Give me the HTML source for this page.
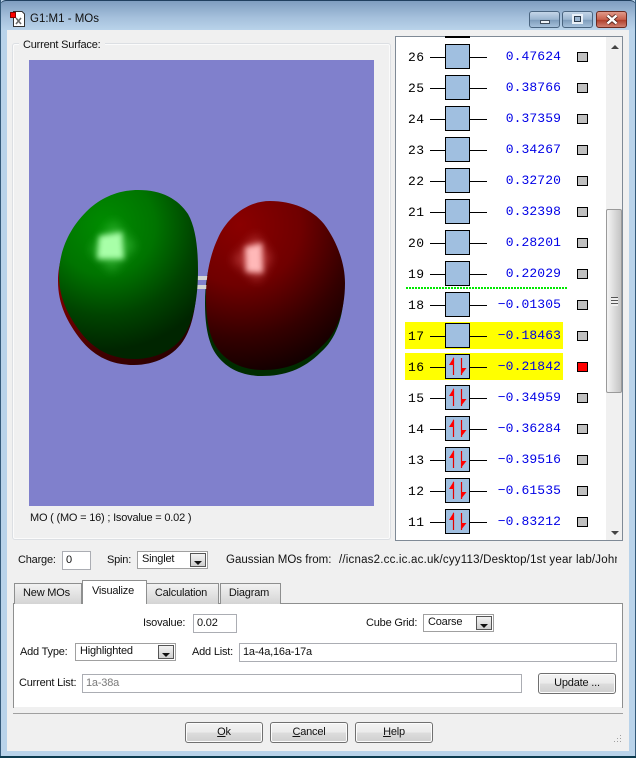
<!DOCTYPE html>
<html>
<head>
<meta charset="utf-8">
<style>
html,body{margin:0;padding:0;width:636px;height:758px;overflow:hidden;background:#b9d3ea;font-family:"Liberation Sans",sans-serif;font-size:11px;letter-spacing:-.2px;color:#111}
div,span{position:absolute;box-sizing:border-box;white-space:nowrap}
.t{line-height:14px}
.inp{background:#fff;border:1px solid #abadb3;height:19px;line-height:17px;padding-left:3px}
.combo{background:#fff;border:1px solid #a0a0a0;height:18px;line-height:14px;padding-left:4px}
.arrow{right:1px;top:1px;bottom:1px;width:16px;border:1px solid #555;background:linear-gradient(#f2f2f2,#cfcfcf)}
.arrow:after{content:"";position:absolute;left:3px;top:7px;border-left:4px solid transparent;border-right:4px solid transparent;border-top:4px solid #111}
.btn{border:1px solid #707070;border-radius:3px;background:linear-gradient(#f3f3f3 0,#ebebeb 48%,#dcdcdc 52%,#cfcfcf 100%);text-align:center;box-shadow:inset 0 0 0 1px #fcfcfc}
.tab{border:1px solid #8e8f8f;border-bottom:none;background:linear-gradient(#f2f2f2,#d4d4d4);text-align:center;line-height:18px;height:21px;top:583px;padding-right:3px}
.n{left:408px;width:20px;font-family:"Liberation Mono",monospace;font-size:13px;letter-spacing:.4px;color:#000;line-height:14px}
.v{right:75px;font-family:"Liberation Mono",monospace;font-size:13px;letter-spacing:.1px;color:#0000e6;line-height:14px;text-align:right}
.l{left:430px;width:57px;height:1px;background:#000}
.b{left:445px;width:25px;height:25px;background:#a0bfe0;border:1px solid #000}
.s{left:577px;width:11px;height:10px;background:#c0c0c0;border:1px solid #000}
</style>
</head>
<body>
<!-- title bar -->
<div style="left:0;top:0;width:636px;height:30px;background:linear-gradient(#7f9ec0,#a4bfdb 55%,#b9d3ea);border-top:1px solid #20405f;border-radius:6px 6px 0 0"></div>
<div style="left:0;top:0;width:1px;height:758px;background:#345a7a"></div>
<div style="left:635px;top:0;width:1px;height:758px;background:#345a7a"></div>
<div style="left:0;top:756px;width:636px;height:2px;background:#0d3b4f"></div>

<svg style="position:absolute;left:9px;top:10px" width="18" height="18">
<path d="M4.500 1.500H13L15.500 4V16.500H4.500Z" fill="#fff" stroke="#333"/>
<rect x="1.500" y="2.500" width="5" height="5" fill="#f00" stroke="#800"/>
<path d="M7 8l5 6M12 8l-5 6" stroke="#666" stroke-width="1.500"/>
</svg>
<div class="t" style="left:30px;top:12px;color:#111;font-size:11.500px;letter-spacing:0">G1:M1 - MOs</div>

<!-- window buttons -->
<div style="left:529px;top:11px;width:31px;height:17px;border:1px solid #4a6580;border-radius:3px;background:linear-gradient(#c4d6e8,#9ab5d0 50%,#7f9dbc 55%,#a5c0da)"></div>
<div style="left:540px;top:20px;width:10px;height:4px;background:#eef3f8;border:1px solid #3c4a5a"></div>
<div style="left:562px;top:11px;width:31px;height:17px;border:1px solid #4a6580;border-radius:3px;background:linear-gradient(#c4d6e8,#9ab5d0 50%,#7f9dbc 55%,#a5c0da)"></div>
<div style="left:572px;top:14px;width:11px;height:10px;background:#3c4a5a;border:2px solid #e8f0f8"></div>
<div style="left:574px;top:16px;width:7px;height:6px;background:#9ab5d0;border:1px solid #2c3a4a"></div>
<div style="left:596px;top:11px;width:31px;height:17px;border:1px solid #6b2a20;border-radius:3px;background:linear-gradient(#e09a8a,#c8604c 50%,#b0402c 55%,#d08070)"></div>
<svg style="position:absolute;left:604px;top:13px" width="16" height="13"><path d="M3.500 2.500L12.500 10.500M12.500 2.500L3.500 10.500" stroke="#4a2018" stroke-width="4"/><path d="M3.500 2.500L12.500 10.500M12.500 2.500L3.500 10.500" stroke="#fff" stroke-width="2.500"/></svg>

<!-- client -->
<div style="left:7px;top:30px;width:622px;height:721px;background:#f0f0f0"></div>

<!-- group box -->
<div style="left:12px;top:43px;width:379px;height:497px;border:1px solid #dcdfe3;border-radius:3px;box-shadow:inset 0 0 0 1px #fbfbfb"></div>
<div class="t" style="left:19px;top:38px;background:#f0f0f0;padding:0 4px">Current Surface:</div>
<div style="left:29px;top:60px;width:345px;height:446px;background:#8080cc"></div>

<svg style="position:absolute;left:29px;top:60px" width="345" height="446" viewBox="29 60 345 446">
<defs>
<radialGradient id="gg" gradientUnits="userSpaceOnUse" cx="105" cy="225" r="125">
<stop offset="0" stop-color="#008c00"/><stop offset=".4" stop-color="#007400"/><stop offset=".72" stop-color="#004400"/><stop offset="1" stop-color="#002500"/>
</radialGradient>
<radialGradient id="rg" gradientUnits="userSpaceOnUse" cx="240" cy="225" r="150">
<stop offset="0" stop-color="#8a0000"/><stop offset=".4" stop-color="#700000"/><stop offset=".75" stop-color="#340000"/><stop offset="1" stop-color="#120000"/>
</radialGradient>
<linearGradient id="rs" gradientUnits="userSpaceOnUse" x1="58" y1="290" x2="170" y2="365"><stop offset="0" stop-color="#7a0000"/><stop offset=".5" stop-color="#400000"/><stop offset="1" stop-color="#2a0000"/></linearGradient>
<filter id="bl" x="-50%" y="-50%" width="200%" height="200%"><feGaussianBlur stdDeviation="3"/></filter>
<filter id="bl2" x="-50%" y="-50%" width="200%" height="200%"><feGaussianBlur stdDeviation="5"/></filter>
<path id="gp" d="M138 190C162 190 178 199 188 214C196 228 198 250 198 270C198 296 194 318 186 332C176 350 155 359 135 359C112 359 95 350 82 334C68 316 59 298 59 275C59 250 70 228 86 212C100 198 118 190 138 190Z"/>
<path id="rp" d="M270 201C292 201 312 209 324 224C336 240 345 262 345 283C345 312 336 334 322 346C304 364 285 370 263 370C240 370 224 360 215 345C208 332 206 315 206 297C206 275 210 255 218 238C226 220 245 201 270 201Z"/>
</defs>
<use href="#gp" x="-1" y="6" fill="url(#rs)"/>
<use href="#rp" x="-1" y="6" fill="#002c00"/>
<rect x="196" y="276" width="12" height="4" fill="#d4d4d4"/>
<rect x="195" y="285" width="12" height="4" fill="#d4d4d4"/>
<use href="#gp" fill="url(#gg)"/>
<path d="M114 220L136 246L112 272L90 250Z" fill="#40c040" opacity=".6" filter="url(#bl2)"/>
<path d="M99 236L122 232L124 259L97 259Z" fill="#a8ffa8" filter="url(#bl)"/>
<use href="#rp" fill="url(#rg)"/>
<path d="M256 234L272 258L258 282L232 260Z" fill="#d05050" opacity=".6" filter="url(#bl2)"/>
<path d="M245 247L262 243L263 273L246 272Z" fill="#ffb8b8" filter="url(#bl)"/>
</svg>
<div class="t" style="left:30px;top:511px">MO ( (MO = 16) ; Isovalue = 0.02 )</div>

<!-- MO list -->
<div style="left:395px;top:36px;width:228px;height:505px;background:#fff;border:1px solid #7f8a96;overflow:hidden"></div>
<div style="left:445px;top:36px;width:25px;height:2px;background:#000"></div>
<div style="left:606px;top:37px;width:16px;height:503px;background:#f0f0f0"></div>
<div style="left:606px;top:209px;width:16px;height:184px;border:1px solid #9a9a9a;border-radius:2px;background:linear-gradient(90deg,#f4f4f4,#dcdcdc 50%,#c4c4c4)"></div>
<div style="left:611px;top:297px;width:7px;height:9px;background:repeating-linear-gradient(#555 0,#555 1px,#eee 1px,#eee 3px)"></div>
<div style="left:611px;top:45px;border-left:4px solid transparent;border-right:4px solid transparent;border-bottom:4px solid #444"></div>
<div style="left:611px;top:531px;border-left:4px solid transparent;border-right:4px solid transparent;border-top:4px solid #444"></div>

<div style="left:405px;top:322px;width:158px;height:27px;background:#ff0"></div>
<div style="left:405px;top:353px;width:158px;height:27px;background:#ff0"></div>
<div style="left:406px;top:287px;width:161px;height:2px;background:repeating-linear-gradient(90deg,#00e800 0,#00e800 2px,transparent 2px,transparent 3px)"></div>

<div class="n" style="top:51px">26</div><div class="l" style="top:57px"></div><div class="b" style="top:44px"></div><div class="v" style="top:50px">0.47624</div><div class="s" style="top:52px"></div>
<div class="n" style="top:82px">25</div><div class="l" style="top:88px"></div><div class="b" style="top:75px"></div><div class="v" style="top:81px">0.38766</div><div class="s" style="top:83px"></div>
<div class="n" style="top:113px">24</div><div class="l" style="top:119px"></div><div class="b" style="top:106px"></div><div class="v" style="top:112px">0.37359</div><div class="s" style="top:114px"></div>
<div class="n" style="top:144px">23</div><div class="l" style="top:150px"></div><div class="b" style="top:137px"></div><div class="v" style="top:143px">0.34267</div><div class="s" style="top:145px"></div>
<div class="n" style="top:175px">22</div><div class="l" style="top:181px"></div><div class="b" style="top:168px"></div><div class="v" style="top:174px">0.32720</div><div class="s" style="top:176px"></div>
<div class="n" style="top:206px">21</div><div class="l" style="top:212px"></div><div class="b" style="top:199px"></div><div class="v" style="top:205px">0.32398</div><div class="s" style="top:207px"></div>
<div class="n" style="top:237px">20</div><div class="l" style="top:243px"></div><div class="b" style="top:230px"></div><div class="v" style="top:236px">0.28201</div><div class="s" style="top:238px"></div>
<div class="n" style="top:268px">19</div><div class="l" style="top:274px"></div><div class="b" style="top:261px"></div><div class="v" style="top:267px">0.22029</div><div class="s" style="top:269px"></div>
<div class="n" style="top:299px">18</div><div class="l" style="top:305px"></div><div class="b" style="top:292px"></div><div class="v" style="top:298px">−0.01305</div><div class="s" style="top:300px"></div>
<div class="n" style="top:330px">17</div><div class="l" style="top:336px"></div><div class="b" style="top:323px"></div><div class="v" style="top:329px">−0.18463</div><div class="s" style="top:331px"></div>
<div class="n" style="top:361px">16</div><div class="l" style="top:367px"></div><div class="b" style="top:354px"></div><div class="v" style="top:360px">−0.21842</div><div class="s" style="top:362px;background:#f00"></div>
<div class="n" style="top:392px">15</div><div class="l" style="top:398px"></div><div class="b" style="top:385px"></div><div class="v" style="top:391px">−0.34959</div><div class="s" style="top:393px"></div>
<div class="n" style="top:423px">14</div><div class="l" style="top:429px"></div><div class="b" style="top:416px"></div><div class="v" style="top:422px">−0.36284</div><div class="s" style="top:424px"></div>
<div class="n" style="top:454px">13</div><div class="l" style="top:460px"></div><div class="b" style="top:447px"></div><div class="v" style="top:453px">−0.39516</div><div class="s" style="top:455px"></div>
<div class="n" style="top:485px">12</div><div class="l" style="top:491px"></div><div class="b" style="top:478px"></div><div class="v" style="top:484px">−0.61535</div><div class="s" style="top:486px"></div>
<div class="n" style="top:516px">11</div><div class="l" style="top:522px"></div><div class="b" style="top:509px"></div><div class="v" style="top:515px">−0.83212</div><div class="s" style="top:517px"></div>

<svg style="position:absolute;left:445px;top:354px" width="25" height="180">
<defs><g id="e"><path d="M8.500 4V21" stroke="#e00000" stroke-width="1.200"/><path d="M9 3L4 11H9Z" fill="#f00"/><path d="M16.500 4V21" stroke="#e00000" stroke-width="1.200"/><path d="M16 21L21.500 14H16Z" fill="#f00"/></g></defs>
<use href="#e" y="0"/><use href="#e" y="31"/><use href="#e" y="62"/><use href="#e" y="93"/><use href="#e" y="124"/><use href="#e" y="155"/>
</svg>

<!-- charge row -->
<div class="t" style="left:18px;top:553px">Charge:</div>
<div class="inp" style="left:62px;top:551px;width:29px">0</div>
<div class="t" style="left:107px;top:553px">Spin:</div>
<div class="combo" style="left:137px;top:551px;width:71px">Singlet<span class="arrow"></span></div>
<div class="t" style="left:226px;top:553px;font-size:11.500px;letter-spacing:0">Gaussian MOs from:</div>
<div class="t" style="left:339px;top:553px;width:278px;overflow:hidden;font-size:11.500px;letter-spacing:.2px">//icnas2.cc.ic.ac.uk/cyy113/Desktop/1st year lab/John</div>

<!-- tabs -->
<div style="left:13px;top:603px;width:610px;height:105px;background:#fff;border:1px solid #8e8f8f;border-bottom:none"></div>
<div style="left:14px;top:707px;width:608px;height:7px;background:#f0f0f0"></div>
<div class="tab" style="left:14px;width:68px">New MOs</div>
<div class="tab" style="left:146px;width:73px">Calculation</div>
<div class="tab" style="left:220px;width:61px">Diagram</div>
<div class="tab" style="left:82px;width:65px;top:580px;height:24px;background:#fff;z-index:2;line-height:20px">Visualize</div>

<div class="t" style="left:143px;top:616px">Isovalue:</div>
<div class="inp" style="left:193px;top:614px;width:44px">0.02</div>
<div class="t" style="left:366px;top:616px">Cube Grid:</div>
<div class="combo" style="left:423px;top:614px;width:71px">Coarse<span class="arrow"></span></div>

<div class="t" style="left:20px;top:645px">Add Type:</div>
<div class="combo" style="left:75px;top:643px;width:101px">Highlighted<span class="arrow"></span></div>
<div class="t" style="left:192px;top:645px">Add List:</div>
<div class="inp" style="left:239px;top:643px;width:378px">1a-4a,16a-17a</div>

<div class="t" style="left:19px;top:676px">Current List:</div>
<div class="inp" style="left:82px;top:674px;width:440px;color:#7a7a7a">1a-38a</div>
<div class="btn" style="left:538px;top:673px;width:78px;height:21px;line-height:18px">Update ...</div>

<!-- footer -->
<div style="left:13px;top:713px;width:610px;height:1px;background:#a0a0a0"></div>
<div class="btn" style="left:185px;top:722px;width:78px;height:21px;line-height:18px"><u>O</u>k</div>
<div class="btn" style="left:270px;top:722px;width:78px;height:21px;line-height:18px"><u>C</u>ancel</div>
<div class="btn" style="left:355px;top:722px;width:78px;height:21px;line-height:18px"><u>H</u>elp</div>
<svg style="position:absolute;left:612px;top:733px" width="12" height="12"><path d="M8 2h1v1H8zM5 5h1v1H5zM8 5h1v1H8zM2 8h1v1H2zM5 8h1v1H5zM8 8h1v1H8z" fill="#a0a0a0"/></svg>
</body>
</html>
